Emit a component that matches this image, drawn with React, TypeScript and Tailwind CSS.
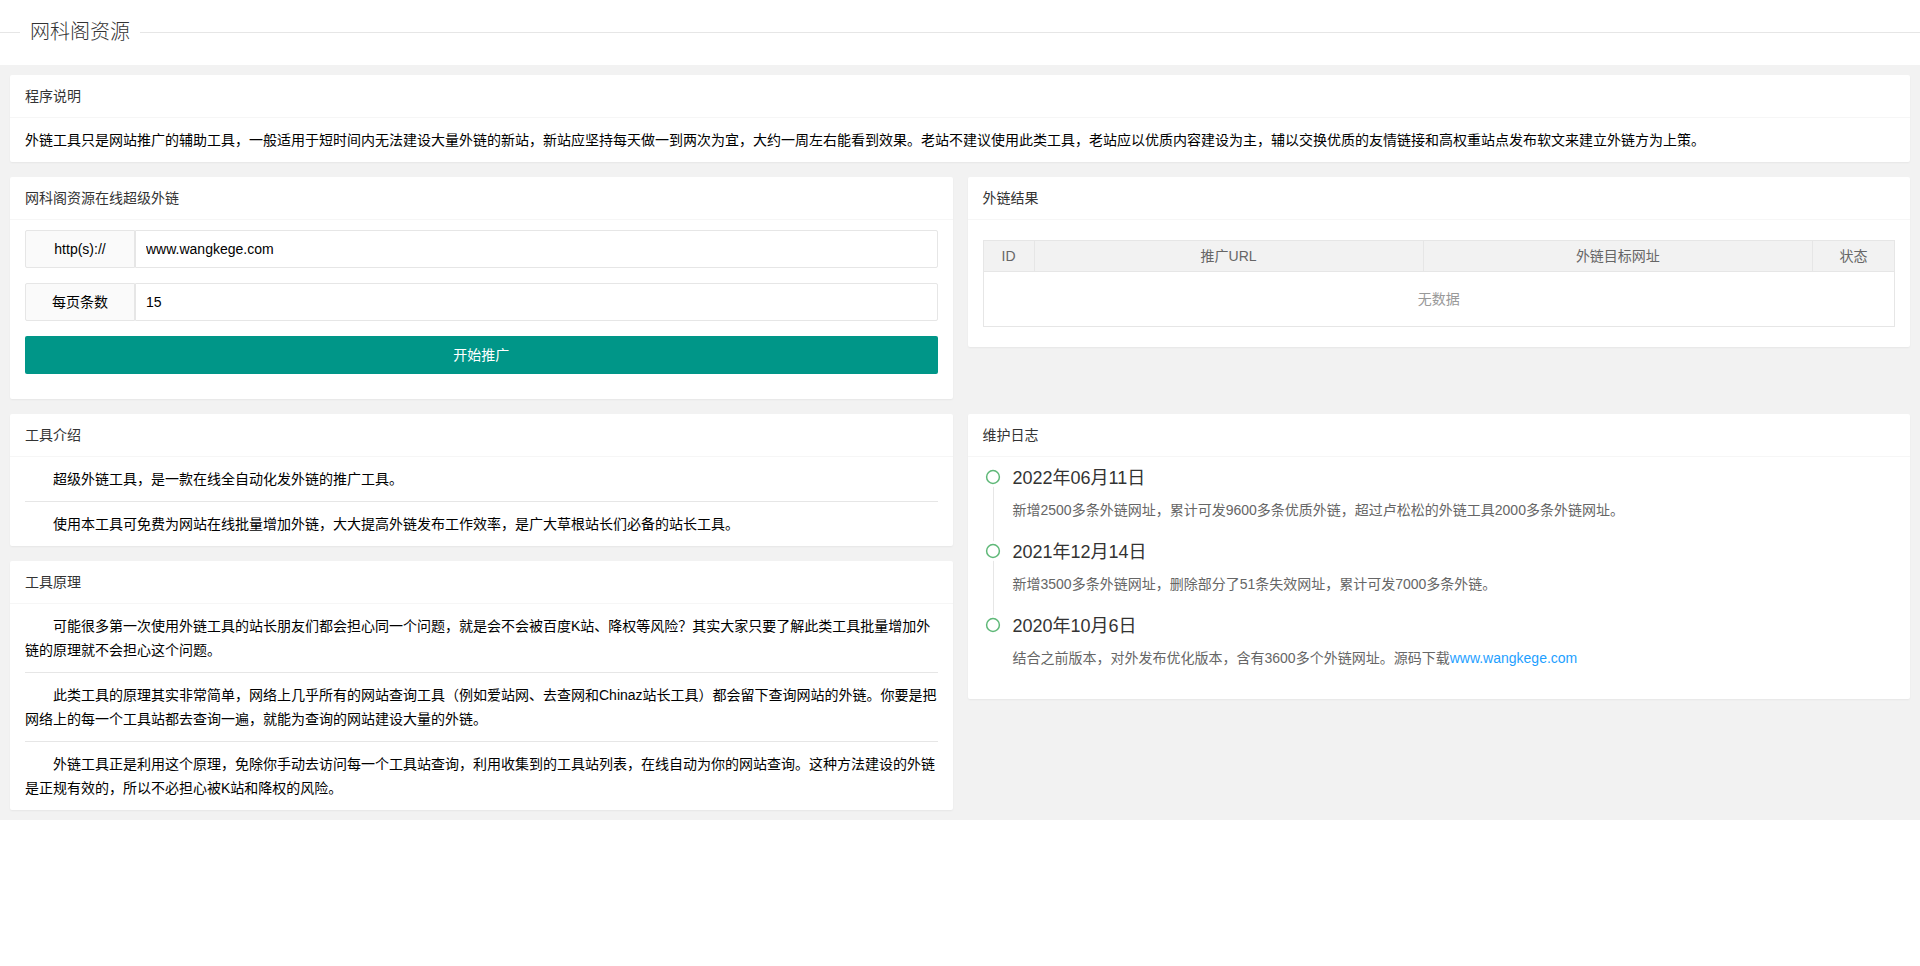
import React from 'react';

const card = 'bg-white rounded-[2px] shadow-[0_1px_2px_0_rgba(0,0,0,0.05)]';

function CardHeader({ children }: { children: React.ReactNode }) {
  return (
    <div className="h-[43px] leading-[42px] px-[15px] border-b border-[#f6f6f6] text-[14px] text-[#333]">
      {children}
    </div>
  );
}

const logs = [
  { date: '2022年06月11日', text: '新增2500多条外链网址，累计可发9600多条优质外链，超过卢松松的外链工具2000多条外链网址。' },
  { date: '2021年12月14日', text: '新增3500多条外链网址，删除部分了51条失效网址，累计可发7000多条外链。' },
  { date: '2020年10月6日', text: '结合之前版本，对外发布优化版本，含有3600多个外链网址。源码下载', link: 'www.wangkege.com' },
];

// 每段按原页面的换行位置拆开
const principles = [
  ['可能很多第一次使用外链工具的站长朋友们都会担心同一个问题，就是会不会被百度K站、降权等风险？其实大家只要了解此类工具批量增加外', '链的原理就不会担心这个问题。'],
  ['此类工具的原理其实非常简单，网络上几乎所有的网站查询工具（例如爱站网、去查网和Chinaz站长工具）都会留下查询网站的外链。你要是把', '网络上的每一个工具站都去查询一遍，就能为查询的网站建设大量的外链。'],
  ['外链工具正是利用这个原理，免除你手动去访问每一个工具站查询，利用收集到的工具站列表，在线自动为你的网站查询。这种方法建设的外链', '是正规有效的，所以不必担心被K站和降权的风险。'],
];

export default function App() {
  return (
    <div className="min-h-screen bg-white text-[14px] text-black font-['Liberation_Sans','Noto_Sans_CJK_SC',sans-serif]">
      {/* 标题 */}
      <div className="h-[65px] pt-[17px]">
        <div className="flex items-center h-[30px]">
          <span className="w-[20px] h-px bg-[#e6e6e6]" />
          <span className="px-[10px] text-[20px] leading-[30px] font-light text-[#333]">网科阁资源</span>
          <span className="flex-1 h-px bg-[#e6e6e6]" />
        </div>
      </div>

      <div className="bg-[#f2f2f2] p-[10px]">
        <div className={`${card} mb-[15px]`}>
          <CardHeader>程序说明</CardHeader>
          <div className="px-[15px] py-[10px] leading-[24px]">
            外链工具只是网站推广的辅助工具，一般适用于短时间内无法建设大量外链的新站，新站应坚持每天做一到两次为宜，大约一周左右能看到效果。老站不建议使用此类工具，老站应以优质内容建设为主，辅以交换优质的友情链接和高权重站点发布软文来建立外链方为上策。
          </div>
        </div>

        <div className="grid grid-cols-2 gap-x-[15px] items-start mb-[15px]">
          <div className={card}>
            <CardHeader>网科阁资源在线超级外链</CardHeader>
            <div className="px-[15px] py-[10px]">
              <div className="flex h-[38px] mb-[15px]">
                <label className="w-[110px] shrink-0 border border-[#e6e6e6] bg-[#fafafa] text-center leading-[36px] rounded-l-[2px]">http(s)://</label>
                <input className="flex-1 min-w-0 border border-[#e6e6e6] px-[10px] outline-none rounded-r-[2px]" defaultValue="www.wangkege.com" />
              </div>
              <div className="flex h-[38px] mb-[15px]">
                <label className="w-[110px] shrink-0 border border-[#e6e6e6] bg-[#fafafa] text-center leading-[36px] rounded-l-[2px]">每页条数</label>
                <input className="flex-1 min-w-0 border border-[#e6e6e6] px-[10px] outline-none rounded-r-[2px]" defaultValue="15" />
              </div>
              <button className="w-full h-[38px] mb-[15px] bg-[#009688] text-white rounded-[2px]">开始推广</button>
            </div>
          </div>

          <div className={card}>
            <CardHeader>外链结果</CardHeader>
            <div className="px-[15px] py-[10px]">
              <div className="my-[10px] border border-[#e6e6e6]">
                <div className="grid grid-cols-[51px_1fr_1fr_81px] bg-[#f2f2f2] border-b border-[#e6e6e6] text-[#666]">
                  <div className="h-[30px] leading-[30px] text-center border-r border-[#e6e6e6]">ID</div>
                  <div className="h-[30px] leading-[30px] text-center border-r border-[#e6e6e6]">推广URL</div>
                  <div className="h-[30px] leading-[30px] text-center border-r border-[#e6e6e6]">外链目标网址</div>
                  <div className="h-[30px] leading-[30px] text-center">状态</div>
                </div>
                <div className="h-[54px] flex items-center justify-center text-[#999]">无数据</div>
              </div>
            </div>
          </div>
        </div>

        <div className="grid grid-cols-2 gap-x-[15px] items-start">
          <div className="flex flex-col gap-[15px]">
            <div className={card}>
              <CardHeader>工具介绍</CardHeader>
              <div className="px-[15px] leading-[24px]">
                <p className="py-[10px] indent-[2em] border-b border-[#e6e6e6]">超级外链工具，是一款在线全自动化发外链的推广工具。</p>
                <p className="py-[10px] indent-[2em]">使用本工具可免费为网站在线批量增加外链，大大提高外链发布工作效率，是广大草根站长们必备的站长工具。</p>
              </div>
            </div>
            <div className={card}>
              <CardHeader>工具原理</CardHeader>
              <div className="px-[15px] leading-[24px]">
                {principles.map((lines, i) => (
                  <p key={i} className={`py-[10px] indent-[2em] whitespace-nowrap ${i < principles.length - 1 ? 'border-b border-[#e6e6e6]' : ''}`}>
                    {lines[0]}
                    <br />
                    {lines[1]}
                  </p>
                ))}
              </div>
            </div>
          </div>

          <div className={card}>
            <CardHeader>维护日志</CardHeader>
            <div className="px-[15px] py-[10px]">
              <div className="pl-[5px]">
                {logs.map((l, i) => (
                  <div key={l.date} className="relative pb-[20px]">
                    {i < logs.length - 1 && <div className="absolute left-[5px] top-0 w-px h-full bg-[#e6e6e6]" />}
                    <div className="absolute -left-[5px] top-0 z-10 w-[20px] h-[20px] rounded-full bg-white">
                      <svg width="20" height="20" viewBox="0 0 20 20">
                        <circle cx="10" cy="10" r="6.4" fill="none" stroke="#5FB878" strokeWidth="1.5" />
                      </svg>
                    </div>
                    <div className="pl-[25px]">
                      <h3 className="text-[18px] leading-[22px] mb-[10px] text-[#333]">{l.date}</h3>
                      <p className="leading-[22px] text-[#666]">
                        {l.text}
                        {l.link && <a className="text-[#1e9fff]">{l.link}</a>}
                      </p>
                    </div>
                  </div>
                ))}
              </div>
            </div>
          </div>
        </div>
      </div>
    </div>
  );
}
